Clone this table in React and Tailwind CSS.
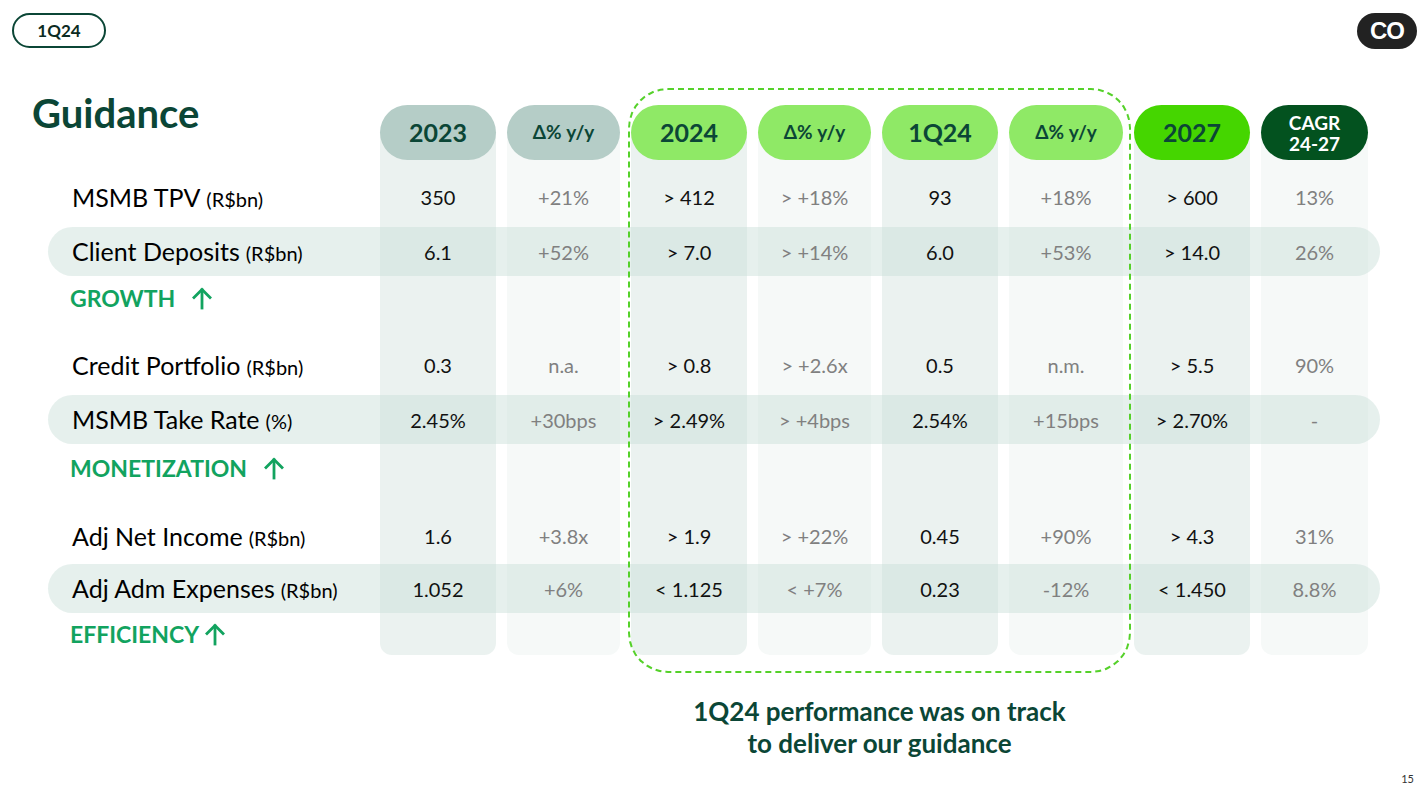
import React from 'react';

const cols = [
  { label: '2023', head: 'bg-[#b5cdc7] text-[#0b4636] text-[25px]', panel: 'bg-[#ebf2f0]', strong: true },
  { label: 'Δ% y/y', head: 'bg-[#b5cdc7] text-[#0b4636] text-[19px]', panel: 'bg-[#f6f9f8]', strong: false },
  { label: '2024', head: 'bg-[#8fe966] text-[#0b4636] text-[25px]', panel: 'bg-[#ebf2f0]', strong: true },
  { label: 'Δ% y/y', head: 'bg-[#8fe966] text-[#0b4636] text-[19px]', panel: 'bg-[#f6f9f8]', strong: false },
  { label: '1Q24', head: 'bg-[#8fe966] text-[#0b4636] text-[25px]', panel: 'bg-[#ebf2f0]', strong: true },
  { label: 'Δ% y/y', head: 'bg-[#8fe966] text-[#0b4636] text-[19px]', panel: 'bg-[#f6f9f8]', strong: false },
  { label: '2027', head: 'bg-[#45d600] text-[#0b4636] text-[25px]', panel: 'bg-[#ebf2f0]', strong: true },
  { label: 'CAGR', head: 'bg-[#03521f] text-white text-[19px] leading-[21px]', panel: 'bg-[#f6f9f8]', strong: false },
];

const colStart = ['col-start-2', 'col-start-3', 'col-start-4', 'col-start-5', 'col-start-6', 'col-start-7', 'col-start-8', 'col-start-9'];

const rows = [
  { row: 'row-start-3', name: 'MSMB TPV', unit: '(R$bn)', values: ['350', '+21%', '> 412', '> +18%', '93', '+18%', '> 600', '13%'] },
  { row: 'row-start-5', band: true, name: 'Client Deposits', unit: '(R$bn)', values: ['6.1', '+52%', '> 7.0', '> +14%', '6.0', '+53%', '> 14.0', '26%'] },
  { row: 'row-start-8', name: 'Credit Portfolio', unit: '(R$bn)', values: ['0.3', 'n.a.', '> 0.8', '> +2.6x', '0.5', 'n.m.', '> 5.5', '90%'] },
  { row: 'row-start-10', band: true, name: 'MSMB Take Rate', unit: '(%)', values: ['2.45%', '+30bps', '> 2.49%', '> +4bps', '2.54%', '+15bps', '> 2.70%', '-'] },
  { row: 'row-start-13', name: 'Adj Net Income', unit: '(R$bn)', values: ['1.6', '+3.8x', '> 1.9', '> +22%', '0.45', '+90%', '> 4.3', '31%'] },
  { row: 'row-start-15', band: true, name: 'Adj Adm Expenses', unit: '(R$bn)', values: ['1.052', '+6%', '< 1.125', '< +7%', '0.23', '-12%', '< 1.450', '8.8%'] },
];

const sections = [
  { row: 'row-start-6', label: 'GROWTH', gap: 'gap-[16px]' },
  { row: 'row-start-11', label: 'MONETIZATION', gap: 'gap-[16px]' },
  { row: 'row-start-16', label: 'EFFICIENCY', gap: 'gap-[5px]' },
];

const UpArrow = () => (
  <svg width="22" height="24" viewBox="0 0 22 24" fill="none" stroke="#12a35f" strokeWidth="2.8" strokeLinecap="square">
    <path d="M11 22V4" />
    <path d="M3 11.5L11 3.5L19 11.5" />
  </svg>
);

export default function App() {
  return (
    <div className="w-[1428px] h-[807px] bg-white overflow-hidden flex flex-col font-['Lato','Noto_Sans',sans-serif] text-black">
      {/* top bar */}
      <div className="flex justify-between items-start pl-[12px] pr-[11px] pt-[13px]">
        <div className="w-[94px] h-[35px] rounded-full border-2 border-[#0b4636] flex items-center justify-center text-[17px] font-bold text-[#0b2a22]">
          1Q24
        </div>
        <div className="w-[60px] h-[36px] rounded-full bg-[#222222] flex items-center justify-center text-white font-['Liberation_Sans',sans-serif] font-black text-[24px] tracking-[-1px] leading-none">
          CO
        </div>
      </div>

      {/* table */}
      <div className="mt-[56px] ml-[32px] grid grid-cols-[337px_116px_113px_116px_113px_116px_114px_116px_107px] gap-x-[11px] grid-rows-[55px_12px_50px_5px_49px_44px_20px_50px_5px_49px_48px_19px_50px_3px_49px_42px_auto]">
        {/* column panels */}
        {cols.map((c, i) => (
          <div key={'p' + i} className={`${colStart[i]} row-start-1 row-end-17 mt-[27px] rounded-b-[12px] ${c.panel}`} />
        ))}

        {/* row bands */}
        {rows.filter((r) => r.band).map((r) => (
          <div key={'b' + r.name} className={`${r.row} col-start-1 col-end-10 ml-[16px] mr-[-12px] rounded-full bg-[rgba(200,222,215,0.45)]`} />
        ))}

        {/* title */}
        <h1 className="col-start-1 row-start-1 row-span-2 self-start -mt-[18px] text-[40px] leading-[52px] font-bold text-[#0b4636]">
          Guidance
        </h1>

        {/* header pills */}
        {cols.map((c, i) => (
          <div key={'h' + i} className={`${colStart[i]} row-start-1 rounded-full flex items-center justify-center font-bold text-center ${c.head}`}>
            {c.label === 'CAGR' ? (
              <span>CAGR<br />24-27</span>
            ) : (
              c.label
            )}
          </div>
        ))}

        {/* rows */}
        {rows.map((r) => (
          <React.Fragment key={r.name}>
            <div className={`${r.row} col-start-1 flex items-center pl-[40px] whitespace-nowrap`}>
              <span className="text-[25px] leading-none">
                {r.name}
                <span className="ml-[6px] text-[20px]">{r.unit}</span>
              </span>
            </div>
            {r.values.map((v, i) => (
              <div key={i} className={`${r.row} ${colStart[i]} flex items-center justify-center text-[20px] ${cols[i].strong ? 'text-[#111111]' : 'text-[#808080]'}`}>
                {v}
              </div>
            ))}
          </React.Fragment>
        ))}

        {/* section labels */}
        {sections.map((s) => (
          <div key={s.label} className={`${s.row} col-start-1 flex items-center pl-[38px] ${s.gap} text-[23px] font-bold text-[#12a35f]`}>
            {s.label}
            <UpArrow />
          </div>
        ))}

        {/* dashed highlight */}
        <div className="col-start-4 col-end-8 row-start-1 row-end-17 -mt-[17px] -mb-[18px] -ml-[3px] -mr-[8px] rounded-[40px] border-2 border-dashed border-[#55d12a] pointer-events-none" />

        {/* note */}
        <p className="col-start-4 col-end-8 row-start-17 mt-[40px] -ml-[3px] -mr-[8px] text-center text-[26px] leading-[32px] font-bold text-[#0b4636]">
          1Q24 performance was on track
          <br />
          to deliver our guidance
        </p>
      </div>

      <div className="mt-auto flex justify-end pr-[14px] pb-[20px] text-[11px] text-[#333333]">15</div>
    </div>
  );
}
